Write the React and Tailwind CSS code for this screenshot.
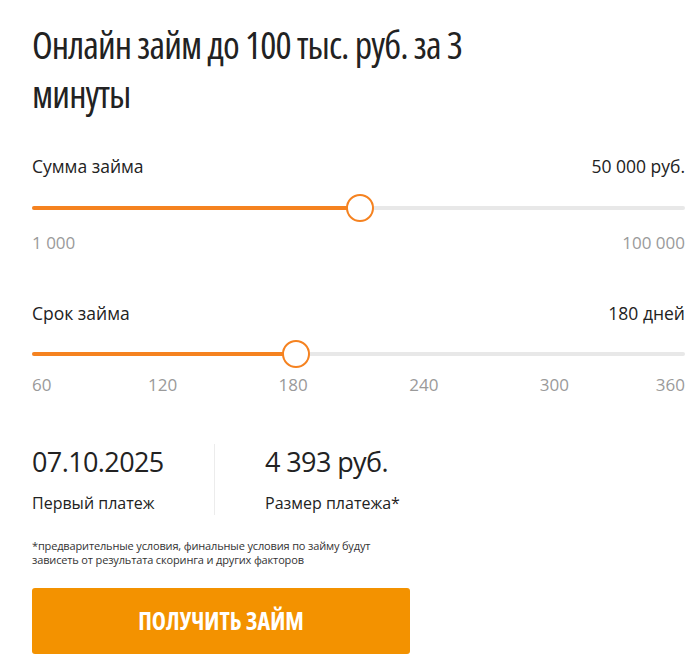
const font = { fontFamily: '"Open Sans", "Noto Sans", sans-serif' };

const Slider = ({ percent }) => (
  <div className="relative h-7">
    <div className="absolute inset-x-0 top-1/2 h-1 -translate-y-1/2 rounded-full bg-[#e8e8e8]" />
    <div
      className="absolute left-0 top-1/2 h-1 -translate-y-1/2 rounded-full bg-[#f58220]"
      style={{ width: `calc(14px + (100% - 28px) * ${percent / 100})` }}
    />
    <div
      className="absolute top-0 h-7 w-7 rounded-full border-2 border-[#f58220] bg-white"
      style={{ left: `calc((100% - 28px) * ${percent / 100})` }}
    />
  </div>
);

const ticks = [60, 120, 180, 240, 300, 360];

export default function App() {
  return (
    <div style={font} className="min-h-[672px] bg-white pl-8 pr-[11px] pt-5 text-[#222]">
      <h1 className="max-w-[480px] text-[38px] font-normal leading-[49px] tracking-[-0.9px] [font-stretch:condensed]">
        Онлайн займ до 100 тыс. руб. за 3 минуты
      </h1>

      <div className="mt-9 flex items-center justify-between text-[17.5px] leading-6">
        <span>Сумма займа</span>
        <span>50 000 руб.</span>
      </div>
      <div className="mt-4">
        <Slider percent={50.2} />
      </div>
      <div className="mt-[10px] flex justify-between text-[17px] leading-[22px] text-[#9a9a9a]">
        <span>1 000</span>
        <span>100 000</span>
      </div>

      <div className="mt-[47px] flex items-center justify-between text-[17.5px] leading-6">
        <span>Срок займа</span>
        <span>180 дней</span>
      </div>
      <div className="mt-[15px]">
        <Slider percent={40} />
      </div>
      <div className="relative mt-[6px] h-[22px] text-[17px] leading-[22px] text-[#9a9a9a]">
        {ticks.map((t, i) => {
          if (i === 0) return <span key={t} className="absolute left-0 top-0">{t}</span>;
          if (i === ticks.length - 1) return <span key={t} className="absolute right-0 top-0">{t}</span>;
          return (
            <span key={t} className="absolute top-0 -translate-x-1/2" style={{ left: `${(i / (ticks.length - 1)) * 100}%` }}>
              {t}
            </span>
          );
        })}
      </div>

      <div className="mt-[48px] flex h-[71px]">
        <div className="w-[182px] pt-px">
          <div className="text-[27px] leading-[34px] tracking-[-0.6px]">07.10.2025</div>
          <div className="mt-3 text-[16px] leading-6">Первый платеж</div>
        </div>
        <div className="border-l border-[#ececec] pl-[50px] pt-px">
          <div className="text-[27px] leading-[34px] tracking-[-0.6px]">4 393 руб.</div>
          <div className="mt-3 text-[16px] leading-6">Размер платежа*</div>
        </div>
      </div>

      <p className="mt-6 max-w-[350px] text-[11px] leading-[14px] tracking-[-0.15px] text-[#333]">
        *предварительные условия, финальные условия по займу будут зависеть от результата скоринга и других факторов
      </p>

      <button className="mt-[21px] flex h-[66px] w-[378px] items-center justify-center rounded-[3px] bg-[#f39200] text-[24px] font-bold text-white [font-stretch:condensed]">
        ПОЛУЧИТЬ ЗАЙМ
      </button>
    </div>
  );
}
